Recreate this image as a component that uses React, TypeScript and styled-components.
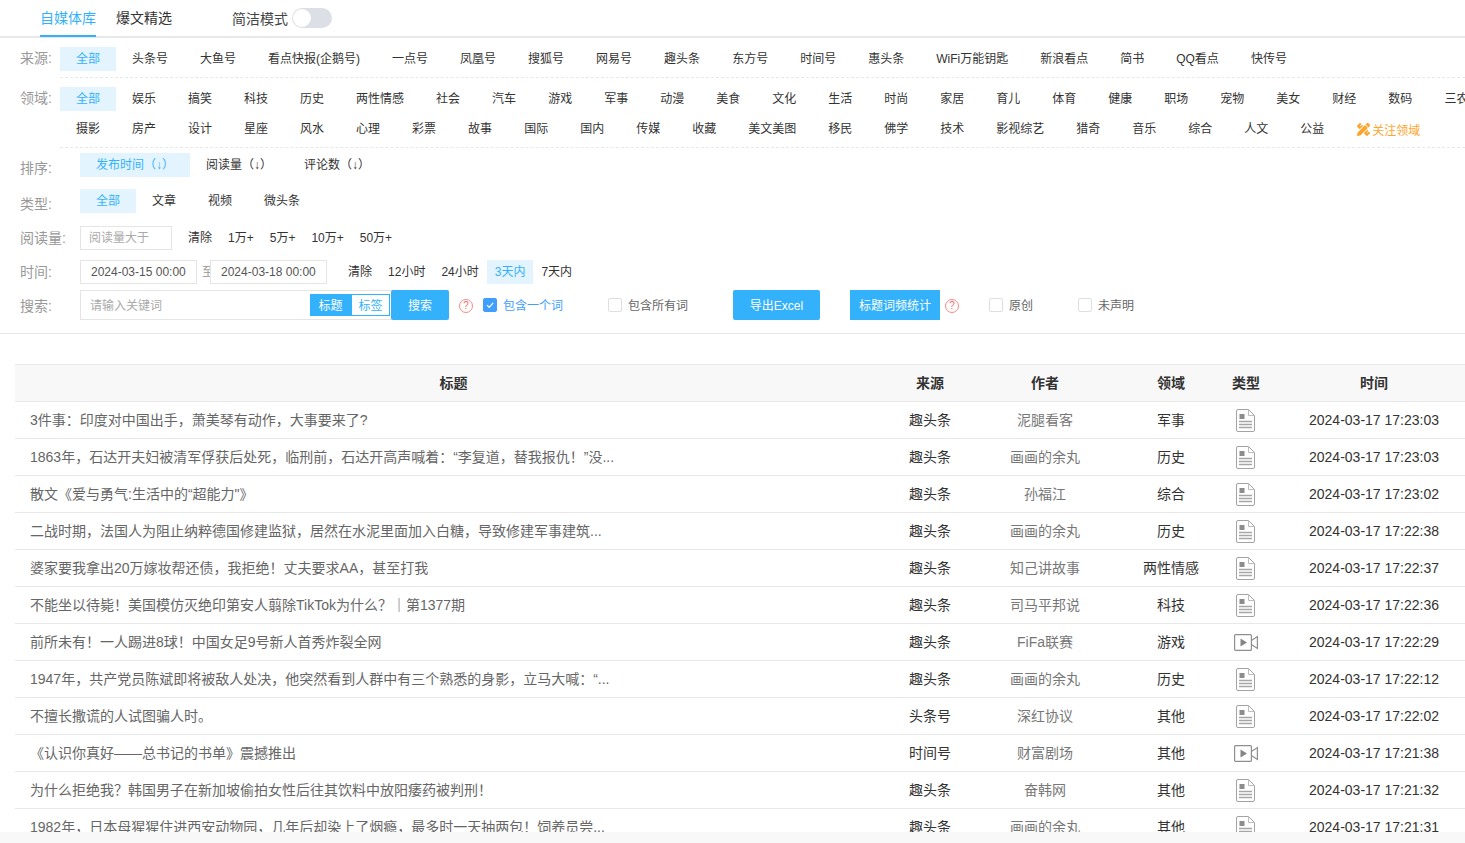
import React from "react";
import styled, { createGlobalStyle } from "styled-components";
import { FaPencilRuler } from "react-icons/fa";

const BLUE = "#33b1fb";

const sources = ["全部", "头条号", "大鱼号", "看点快报(企鹅号)", "一点号", "凤凰号", "搜狐号", "网易号", "趣头条", "东方号", "时间号", "惠头条", "WiFi万能钥匙", "新浪看点", "简书", "QQ看点", "快传号"];
const domainsA = ["全部", "娱乐", "搞笑", "科技", "历史", "两性情感", "社会", "汽车", "游戏", "军事", "动漫", "美食", "文化", "生活", "时尚", "家居", "育儿", "体育", "健康", "职场", "宠物", "美女", "财经", "数码", "三农"];
const domainsB = ["摄影", "房产", "设计", "星座", "风水", "心理", "彩票", "故事", "国际", "国内", "传媒", "收藏", "美文美图", "移民", "佛学", "技术", "影视综艺", "猎奇", "音乐", "综合", "人文", "公益"];

const rows = [
  { title: "3件事：印度对中国出手，萧美琴有动作，大事要来了?", source: "趣头条", author: "泥腿看客", domain: "军事", type: "doc", time: "2024-03-17 17:23:03" },
  { title: "1863年，石达开夫妇被清军俘获后处死，临刑前，石达开高声喊着：“李复道，替我报仇！”没...", source: "趣头条", author: "画画的余丸", domain: "历史", type: "doc", time: "2024-03-17 17:23:03" },
  { title: "散文《爱与勇气:生活中的“超能力\"》", source: "趣头条", author: "孙福江", domain: "综合", type: "doc", time: "2024-03-17 17:23:02" },
  { title: "二战时期，法国人为阻止纳粹德国修建监狱，居然在水泥里面加入白糖，导致修建军事建筑...", source: "趣头条", author: "画画的余丸", domain: "历史", type: "doc", time: "2024-03-17 17:22:38" },
  { title: "婆家要我拿出20万嫁妆帮还债，我拒绝！丈夫要求AA，甚至打我", source: "趣头条", author: "知己讲故事", domain: "两性情感", type: "doc", time: "2024-03-17 17:22:37" },
  { title: "不能坐以待毙！美国模仿灭绝印第安人翦除TikTok为什么？｜第1377期", source: "趣头条", author: "司马平邦说", domain: "科技", type: "doc", time: "2024-03-17 17:22:36" },
  { title: "前所未有！一人踢进8球！中国女足9号新人首秀炸裂全网", source: "趣头条", author: "FiFa联赛", domain: "游戏", type: "video", time: "2024-03-17 17:22:29" },
  { title: "1947年，共产党员陈斌即将被敌人处决，他突然看到人群中有三个熟悉的身影，立马大喊：“...", source: "趣头条", author: "画画的余丸", domain: "历史", type: "doc", time: "2024-03-17 17:22:12" },
  { title: "不擅长撒谎的人试图骗人时。", source: "头条号", author: "深红协议", domain: "其他", type: "doc", time: "2024-03-17 17:22:02" },
  { title: "《认识你真好——总书记的书单》震撼推出", source: "时间号", author: "财富剧场", domain: "其他", type: "video", time: "2024-03-17 17:21:38" },
  { title: "为什么拒绝我？韩国男子在新加坡偷拍女性后往其饮料中放阳痿药被判刑！", source: "趣头条", author: "奋韩网", domain: "其他", type: "doc", time: "2024-03-17 17:21:32" },
  { title: "1982年，日本母猩猩住进西安动物园，几年后却染上了烟瘾，最多时一天抽两包！饲养员尝...", source: "趣头条", author: "画画的余丸", domain: "其他", type: "doc", time: "2024-03-17 17:21:31" },
];

const DocIcon = () => (
  <svg width="19" height="23" viewBox="0 0 19 23" fill="none">
    <path d="M2 .5H12.5L18.5 6.5V21a1.5 1.5 0 0 1-1.5 1.5H2A1.5 1.5 0 0 1 .5 21V2A1.5 1.5 0 0 1 2 .5Z" stroke="#a3a3a3" />
    <path d="M12.5 .5V6.5H18.5" stroke="#bdbdbd" />
    <rect x="3.5" y="5" width="5" height="5" fill="#8c8c8c" />
    <path d="M3 12.5H16M3 15.5H16M3 18.5H16" stroke="#a6a6a6" strokeWidth="1.3" />
  </svg>
);

const VideoIcon = () => (
  <svg width="24" height="17" viewBox="0 0 24 17" fill="none">
    <rect x=".6" y=".6" width="16.8" height="15.8" rx="1" stroke="#8f8f8f" strokeWidth="1.2" />
    <path d="M6.5 4.5L13 8.5L6.5 12.5Z" fill="#858585" />
    <path d="M17.4 6.5L23.4 2.5V14.5L17.4 10.5" stroke="#8f8f8f" strokeWidth="1.2" />
  </svg>
);

const CheckIcon = () => (
  <svg width="10" height="10" viewBox="0 0 10 10" fill="none">
    <path d="M2 5.2L4.2 7.4L8.2 2.8" stroke="#fff" strokeWidth="1.2" />
  </svg>
);

const App = () => (
  <>
    <GlobalStyle />
    <Page>
      <Main>
        <Tabs>
          <Tab $active>自媒体库</Tab>
          <Tab>爆文精选</Tab>
          <ToggleText>简洁模式</ToggleText>
          <Toggle>
            <Knob />
          </Toggle>
        </Tabs>

        <Source>
          <Label $width={40}>来源:</Label>
          <DashedChips>
            {sources.map((el, i) => (
              <Chip key={el} $active={i === 0}>{el}</Chip>
            ))}
          </DashedChips>
        </Source>

        <Domain>
          <Label $width={40}>领域:</Label>
          <DashedChips>
            <ChipLine>
              {domainsA.map((el, i) => (
                <Chip key={el} $active={i === 0}>{el}</Chip>
              ))}
            </ChipLine>
            <ChipLine>
              {domainsB.map((el) => (
                <Chip key={el}>{el}</Chip>
              ))}
              <Follow>
                <FaPencilRuler size={13} />
                <span>关注领域</span>
              </Follow>
            </ChipLine>
          </DashedChips>
        </Domain>

        <SortRow>
          <Label $width={60} $shift={4}>排序:</Label>
          <Chip $active>发布时间（↓）</Chip>
          <Chip>阅读量（↓）</Chip>
          <Chip>评论数（↓）</Chip>
        </SortRow>

        <TypeRow>
          <Label $width={60} $shift={4}>类型:</Label>
          <Chip $active>全部</Chip>
          <Chip>文章</Chip>
          <Chip>视频</Chip>
          <Chip>微头条</Chip>
        </TypeRow>

        <ReadRow>
          <Label $width={60} $shift={1}>阅读量:</Label>
          <ReadInput placeholder="阅读量大于" />
          <QuickGroup $left={8}>
            {["清除", "1万+", "5万+", "10万+", "50万+"].map((el) => (
              <SmallChip key={el}>{el}</SmallChip>
            ))}
          </QuickGroup>
        </ReadRow>

        <TimeRow>
          <Label $width={60} $shift={1}>时间:</Label>
          <DateInput readOnly value="2024-03-15 00:00" />
          <To>至</To>
          <DateInput readOnly value="2024-03-18 00:00" />
          <QuickGroup $left={13}>
            <SmallChip>清除</SmallChip>
            <SmallChip>12小时</SmallChip>
            <SmallChip>24小时</SmallChip>
            <SmallChip $active>3天内</SmallChip>
            <SmallChip>7天内</SmallChip>
          </QuickGroup>
        </TimeRow>

        <SearchRow>
          <Label $width={60} $shift={2}>搜索:</Label>
          <SearchBox>
            <SearchInput placeholder="请输入关键词" />
            <FieldTab $active>标题</FieldTab>
            <FieldTab>标签</FieldTab>
          </SearchBox>
          <SearchButton>搜索</SearchButton>
          <Help $left={10}>?</Help>
          <Box $left={10} $checked>
            <CheckIcon />
          </Box>
          <BoxText $checked>包含一个词</BoxText>
          <Box $left={45} />
          <BoxText>包含所有词</BoxText>
          <ExportButton>导出Excel</ExportButton>
          <StatButton>标题词频统计</StatButton>
          <Help $left={5}>?</Help>
          <Box $left={30} />
          <BoxText>原创</BoxText>
          <Box $left={45} />
          <BoxText>未声明</BoxText>
        </SearchRow>

        <TableWrap>
          <Table>
            <colgroup>
              <col width="877" />
              <col width="76" />
              <col width="154" />
              <col width="98" />
              <col width="52" />
              <col width="204" />
            </colgroup>
            <thead>
              <tr>
                <Th>标题</Th>
                <Th>来源</Th>
                <Th>作者</Th>
                <Th>领域</Th>
                <Th>类型</Th>
                <Th>时间</Th>
              </tr>
            </thead>
            <tbody>
              {rows.map((el, i) => (
                <tr key={i}>
                  <TitleCell>{el.title}</TitleCell>
                  <Td>{el.source}</Td>
                  <AuthorCell>{el.author}</AuthorCell>
                  <Td>{el.domain}</Td>
                  <IconCell>{el.type === "doc" ? <DocIcon /> : <VideoIcon />}</IconCell>
                  <TimeCell>{el.time}</TimeCell>
                </tr>
              ))}
            </tbody>
          </Table>
        </TableWrap>
      </Main>
      <Footer />
    </Page>
  </>
);

const GlobalStyle = createGlobalStyle`
  html, body {
    margin: 0;
    padding: 0;
    height: 100%;
    overflow: hidden;
    background: #fff;
    font-family: "Liberation Sans", "Noto Sans CJK SC", sans-serif;
    color: #333;
  }
  #root {
    height: 100%;
  }
  * {
    box-sizing: border-box;
  }
`;

const Page = styled.div`
  display: flex;
  flex-direction: column;
  height: 100vh;
  overflow: hidden;
`;

const Main = styled.div`
  flex: 1;
  min-height: 0;
  overflow: hidden;
`;

const Footer = styled.div`
  flex: none;
  height: 11px;
  background-color: #f8f8f8;
`;

const Tabs = styled.div`
  display: flex;
  align-items: center;
  height: 38px;
  padding-left: 40px;
  border-bottom: 2px solid #e8e8e8;
`;

const Tab = styled.div<{ $active?: boolean }>`
  height: 38px;
  margin-right: 20px;
  line-height: 38px;
  font-size: 14px;
  color: ${(props) => (props.$active ? BLUE : "#333")};
  border-bottom: 2px solid ${(props) => (props.$active ? BLUE : "transparent")};
`;

const ToggleText = styled.span`
  margin-left: 40px;
  font-size: 14px;
  color: #444;
`;

const Toggle = styled.div`
  display: flex;
  align-items: center;
  width: 40px;
  height: 20px;
  margin-left: 4px;
  padding-left: 1px;
  border-radius: 10px;
  background-color: #dcdfe6;
`;

const Knob = styled.div`
  width: 18px;
  height: 18px;
  border-radius: 50%;
  background-color: #fff;
`;

const Row = styled.div`
  display: flex;
  padding-left: 20px;
  white-space: nowrap;
`;

const Label = styled.span<{ $width: number; $shift?: number }>`
  flex: none;
  width: ${(props) => props.$width}px;
  height: 24px;
  padding-top: ${(props) => props.$shift || 0}px;
  line-height: 22px;
  font-size: 14px;
  color: #999;
`;

const Source = styled(Row)`
  margin-top: 9px;
`;

const Domain = styled(Row)`
  margin-top: 9px;
`;

const DashedChips = styled.div`
  flex: 1;
  min-width: 0;
  display: flex;
  flex-direction: column;
  padding-bottom: 6px;
  border-bottom: 1px dashed #e8e8e8;

  ${Source} & {
    flex-direction: row;
  }
`;

const ChipLine = styled.div`
  display: flex;

  & + & {
    margin-top: 6px;
  }
`;

const Chip = styled.span<{ $active?: boolean }>`
  flex: none;
  height: 24px;
  padding: 0 16px;
  line-height: 25px;
  font-size: 12px;
  color: ${(props) => (props.$active ? BLUE : "#333")};
  background-color: ${(props) => (props.$active ? "#e3f4ff" : "transparent")};
`;

const SmallChip = styled(Chip)`
  padding: 0 8px;
`;

const Follow = styled.span`
  display: flex;
  align-items: center;
  gap: 2px;
  height: 24px;
  padding-left: 17px;
  font-size: 12px;
  color: #ffa52e;
`;

const SortRow = styled(Row)`
  margin-top: 5px;
`;

const TypeRow = styled(Row)`
  margin-top: 12px;
`;

const ReadRow = styled(Row)`
  margin-top: 13px;
`;

const TimeRow = styled(Row)`
  margin-top: 10px;
`;

const SearchRow = styled(Row)`
  align-items: center;
  margin-top: 6px;
  padding-bottom: 13px;
  border-bottom: 1px solid #e8e8e8;
`;

const QuickGroup = styled.div<{ $left: number }>`
  display: flex;
  margin-left: ${(props) => props.$left}px;
`;

const ReadInput = styled.input`
  width: 92px;
  height: 24px;
  padding: 0 8px;
  border: 1px solid #e5e5e5;
  outline: none;
  font: inherit;
  font-size: 12px;

  &::placeholder {
    color: #aaa;
  }
`;

const DateInput = styled.input`
  position: relative;
  width: 117px;
  height: 24px;
  padding: 0 10px;
  border: 1px solid #e5e5e5;
  outline: none;
  background-color: #fff;
  font: inherit;
  font-size: 12px;
  color: #555;
`;

const To = styled.span`
  margin: 0 -4px 0 5px;
  line-height: 24px;
  font-size: 12px;
  color: #999;
`;

const SearchBox = styled.div`
  display: flex;
  align-items: center;
  width: 312px;
  height: 30px;
  padding-right: 1px;
  border: 1px solid #e5e5e5;
`;

const SearchInput = styled.input`
  flex: 1;
  min-width: 0;
  height: 28px;
  padding: 2px 9px 0;
  border: none;
  outline: none;
  font: inherit;
  font-size: 12px;

  &::placeholder {
    color: #aaa;
  }
`;

const FieldTab = styled.span<{ $active?: boolean }>`
  flex: none;
  width: ${(props) => (props.$active ? 41 : 39)}px;
  height: 22px;
  line-height: 22px;
  text-align: center;
  font-size: 12px;
  border: 1px solid ${BLUE};
  color: ${(props) => (props.$active ? "#fff" : BLUE)};
  background-color: ${(props) => (props.$active ? BLUE : "#fff")};
`;

const SearchButton = styled.span`
  flex: none;
  width: 58px;
  height: 30px;
  margin-left: -1px;
  border-radius: 2px;
  line-height: 32px;
  text-align: center;
  font-size: 12px;
  color: #fff;
  background-color: ${BLUE};
`;

const ExportButton = styled(SearchButton)`
  width: 87px;
  margin-left: 45px;
`;

const StatButton = styled(SearchButton)`
  width: 90px;
  margin-left: 30px;
  border-radius: 0;
`;

const Help = styled.span<{ $left: number }>`
  flex: none;
  width: 14px;
  height: 14px;
  margin-left: ${(props) => props.$left}px;
  margin-top: 2px;
  border: 1px solid #f78989;
  border-radius: 50%;
  line-height: 12px;
  text-align: center;
  font-size: 10px;
  color: #f56c6c;
`;

const Box = styled.span<{ $left: number; $checked?: boolean }>`
  flex: none;
  display: flex;
  align-items: center;
  justify-content: center;
  width: 14px;
  height: 14px;
  margin-left: ${(props) => props.$left}px;
  border: 1px solid ${(props) => (props.$checked ? "#409eff" : "#dcdfe6")};
  border-radius: 2px;
  background-color: ${(props) => (props.$checked ? "#409eff" : "#fff")};
`;

const BoxText = styled.span<{ $checked?: boolean }>`
  margin: 0 0 2px 6px;
  font-size: 12px;
  color: ${(props) => (props.$checked ? "#409eff" : "#666")};
`;

const TableWrap = styled.div`
  margin: 30px 0 0 15px;
  overflow: hidden;
`;

const Table = styled.table`
  width: 1461px;
  table-layout: fixed;
  border-collapse: separate;
  border-spacing: 0;
`;

const Th = styled.th`
  height: 38px;
  padding: 0 0 2px;
  border-top: 1px solid #e8e8e8;
  border-bottom: 1px solid #e8e8e8;
  background-color: #f8f8f8;
  font-size: 14px;
  font-weight: 700;
  color: #333;
`;

const Td = styled.td`
  height: 37px;
  padding: 0 0 2px;
  border-bottom: 1px solid #e8e8e8;
  text-align: center;
  white-space: nowrap;
  font-size: 14px;
  color: #333;
`;

const TitleCell = styled(Td)`
  padding-left: 15px;
  text-align: left;
  color: #666;
`;

const AuthorCell = styled(Td)`
  color: #777;
`;

const TimeCell = styled(Td)`
  padding-bottom: 0;
`;

const IconCell = styled(Td)`
  padding: 0 1px 0 0;

  & > svg {
    display: block;
    margin: 0 auto;
  }
`;

export default App;
